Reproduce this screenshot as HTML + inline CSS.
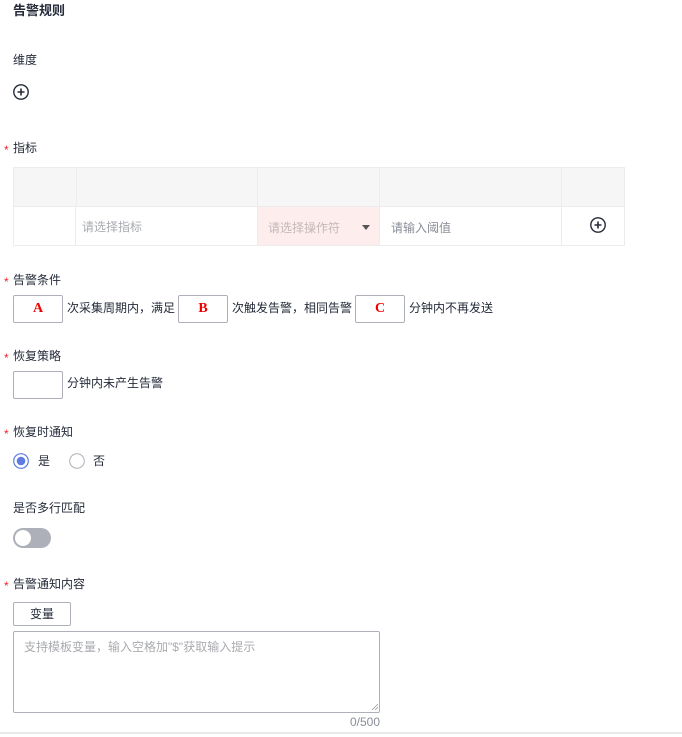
<!DOCTYPE html>
<html><head><meta charset="utf-8"><style>
body{margin:0;width:682px;height:737px;background:#fff;position:relative;overflow:hidden;font-family:"Liberation Sans","Noto Sans CJK SC",sans-serif;font-size:12px;color:#252b3a}
.a{position:absolute;white-space:nowrap;line-height:16px}
.s{position:absolute;color:#f5222d;font-size:12px;line-height:16px}
.box{position:absolute;border:1px solid #adb0b8;border-radius:2px;box-sizing:border-box;background:#fff;text-align:center;color:#e00;font-family:"Liberation Serif",serif;font-weight:bold;font-size:14px;line-height:25px}
.c{position:absolute;box-sizing:border-box;border-right:1px solid #ececec;border-bottom:1px solid #ececec}
.ph{color:#a9abb0}
</style></head><body>
<div class="a" style="left:13px;top:3px;font-weight:bold;font-size:13px">告警规则</div>
<div class="a" style="left:13px;top:52px">维度</div>
<svg style="position:absolute;left:12px;top:83px" width="18" height="18"><circle cx="9" cy="9" r="7.2" fill="none" stroke="#252b3a" stroke-width="1.4"/><path d="M9 5.5v7M5.5 9h7" stroke="#252b3a" stroke-width="1.6"/></svg>

<div class="s" style="left:4px;top:142px">*</div><div class="a" style="left:13px;top:140px">指标</div>
<div style="position:absolute;left:13px;top:167px;width:612px;height:79px;border-left:1px solid #ececec;border-top:1px solid #ececec;box-sizing:border-box"></div>
<div class="c" style="left:14px;top:168px;width:63px;height:39px;background:#f6f6f6"></div>
<div class="c" style="left:77px;top:168px;width:181px;height:39px;background:#f6f6f6"></div>
<div class="c" style="left:258px;top:168px;width:122px;height:39px;background:#f6f6f6"></div>
<div class="c" style="left:380px;top:168px;width:182px;height:39px;background:#f6f6f6"></div>
<div class="c" style="left:562px;top:168px;width:63px;height:39px;background:#f6f6f6"></div>
<div class="c" style="left:14px;top:207px;width:62px;height:39px"></div>
<div class="c" style="left:76px;top:207px;width:182px;height:39px"></div>
<div class="c" style="left:258px;top:207px;width:122px;height:39px;background:#fdeded"></div>
<div class="c" style="left:380px;top:207px;width:182px;height:39px"></div>
<div class="c" style="left:562px;top:207px;width:63px;height:39px"></div>
<div class="a ph" style="left:82px;top:219px">请选择指标</div>
<div class="a" style="left:268px;top:220px;color:#c4b8b8">请选择操作符</div>
<div style="position:absolute;left:362px;top:225px;width:0;height:0;border-left:4px solid transparent;border-right:4px solid transparent;border-top:5px solid #555"></div>
<div class="a" style="left:391px;top:220px;color:#8a8e99">请输入阈值</div>
<svg style="position:absolute;left:589px;top:216px" width="18" height="18"><circle cx="9" cy="9" r="7.2" fill="none" stroke="#252b3a" stroke-width="1.4"/><path d="M9 5.5v7M5.5 9h7" stroke="#252b3a" stroke-width="1.6"/></svg>

<div class="s" style="left:4px;top:274px">*</div><div class="a" style="left:13px;top:272px">告警条件</div>
<div class="box" style="left:13px;top:295px;width:50px;height:28px">A</div>
<div class="a" style="left:67px;top:300px">次采集周期内，满足</div>
<div class="box" style="left:178px;top:295px;width:50px;height:28px">B</div>
<div class="a" style="left:232px;top:300px">次触发告警，相同告警</div>
<div class="box" style="left:355px;top:295px;width:50px;height:28px">C</div>
<div class="a" style="left:409px;top:300px">分钟内不再发送</div>

<div class="s" style="left:4px;top:350px">*</div><div class="a" style="left:13px;top:348px">恢复策略</div>
<div class="box" style="left:13px;top:371px;width:50px;height:28px"></div>
<div class="a" style="left:67px;top:375px">分钟内未产生告警</div>

<div class="s" style="left:4px;top:426px">*</div><div class="a" style="left:13px;top:424px">恢复时通知</div>
<svg style="position:absolute;left:12px;top:452px" width="18" height="18"><circle cx="9" cy="9" r="7.3" fill="#fff" stroke="#5e7ce0" stroke-width="1.2"/><circle cx="9" cy="9" r="4.3" fill="#5e7ce0"/></svg>
<div class="a" style="left:38px;top:453px">是</div>
<svg style="position:absolute;left:68px;top:452px" width="18" height="18"><circle cx="9" cy="9" r="7.3" fill="#fff" stroke="#adb0b8" stroke-width="1"/></svg>
<div class="a" style="left:93px;top:453px">否</div>

<div class="a" style="left:13px;top:500px">是否多行匹配</div>
<div style="position:absolute;left:13px;top:528px;width:38px;height:20px;border-radius:10px;background:#adb0b8"></div>
<div style="position:absolute;left:15px;top:530px;width:16px;height:16px;border-radius:8px;background:#fff"></div>

<div class="s" style="left:4px;top:578px">*</div><div class="a" style="left:13px;top:576px">告警通知内容</div>
<div style="position:absolute;left:13px;top:602px;width:58px;height:24px;border:1px solid #adb0b8;border-radius:2px;box-sizing:border-box;text-align:center;line-height:22px">变量</div>
<div style="position:absolute;left:13px;top:631px;width:367px;height:82px;border:1px solid #adb0b8;border-radius:2px;box-sizing:border-box"></div>
<div class="a ph" style="left:24px;top:639px">支持模板变量，输入空格加"$"获取输入提示</div>
<svg style="position:absolute;left:371px;top:703px" width="8" height="8"><path d="M1 7L7 1M4 7L7 4" stroke="#999" stroke-width="0.8"/></svg>
<div class="a" style="left:330px;top:714px;width:50px;text-align:right;color:#8a8e99">0/500</div>
<div style="position:absolute;left:0;top:732px;width:682px;height:2px;background:#e8e8e8"></div>
</body></html>
